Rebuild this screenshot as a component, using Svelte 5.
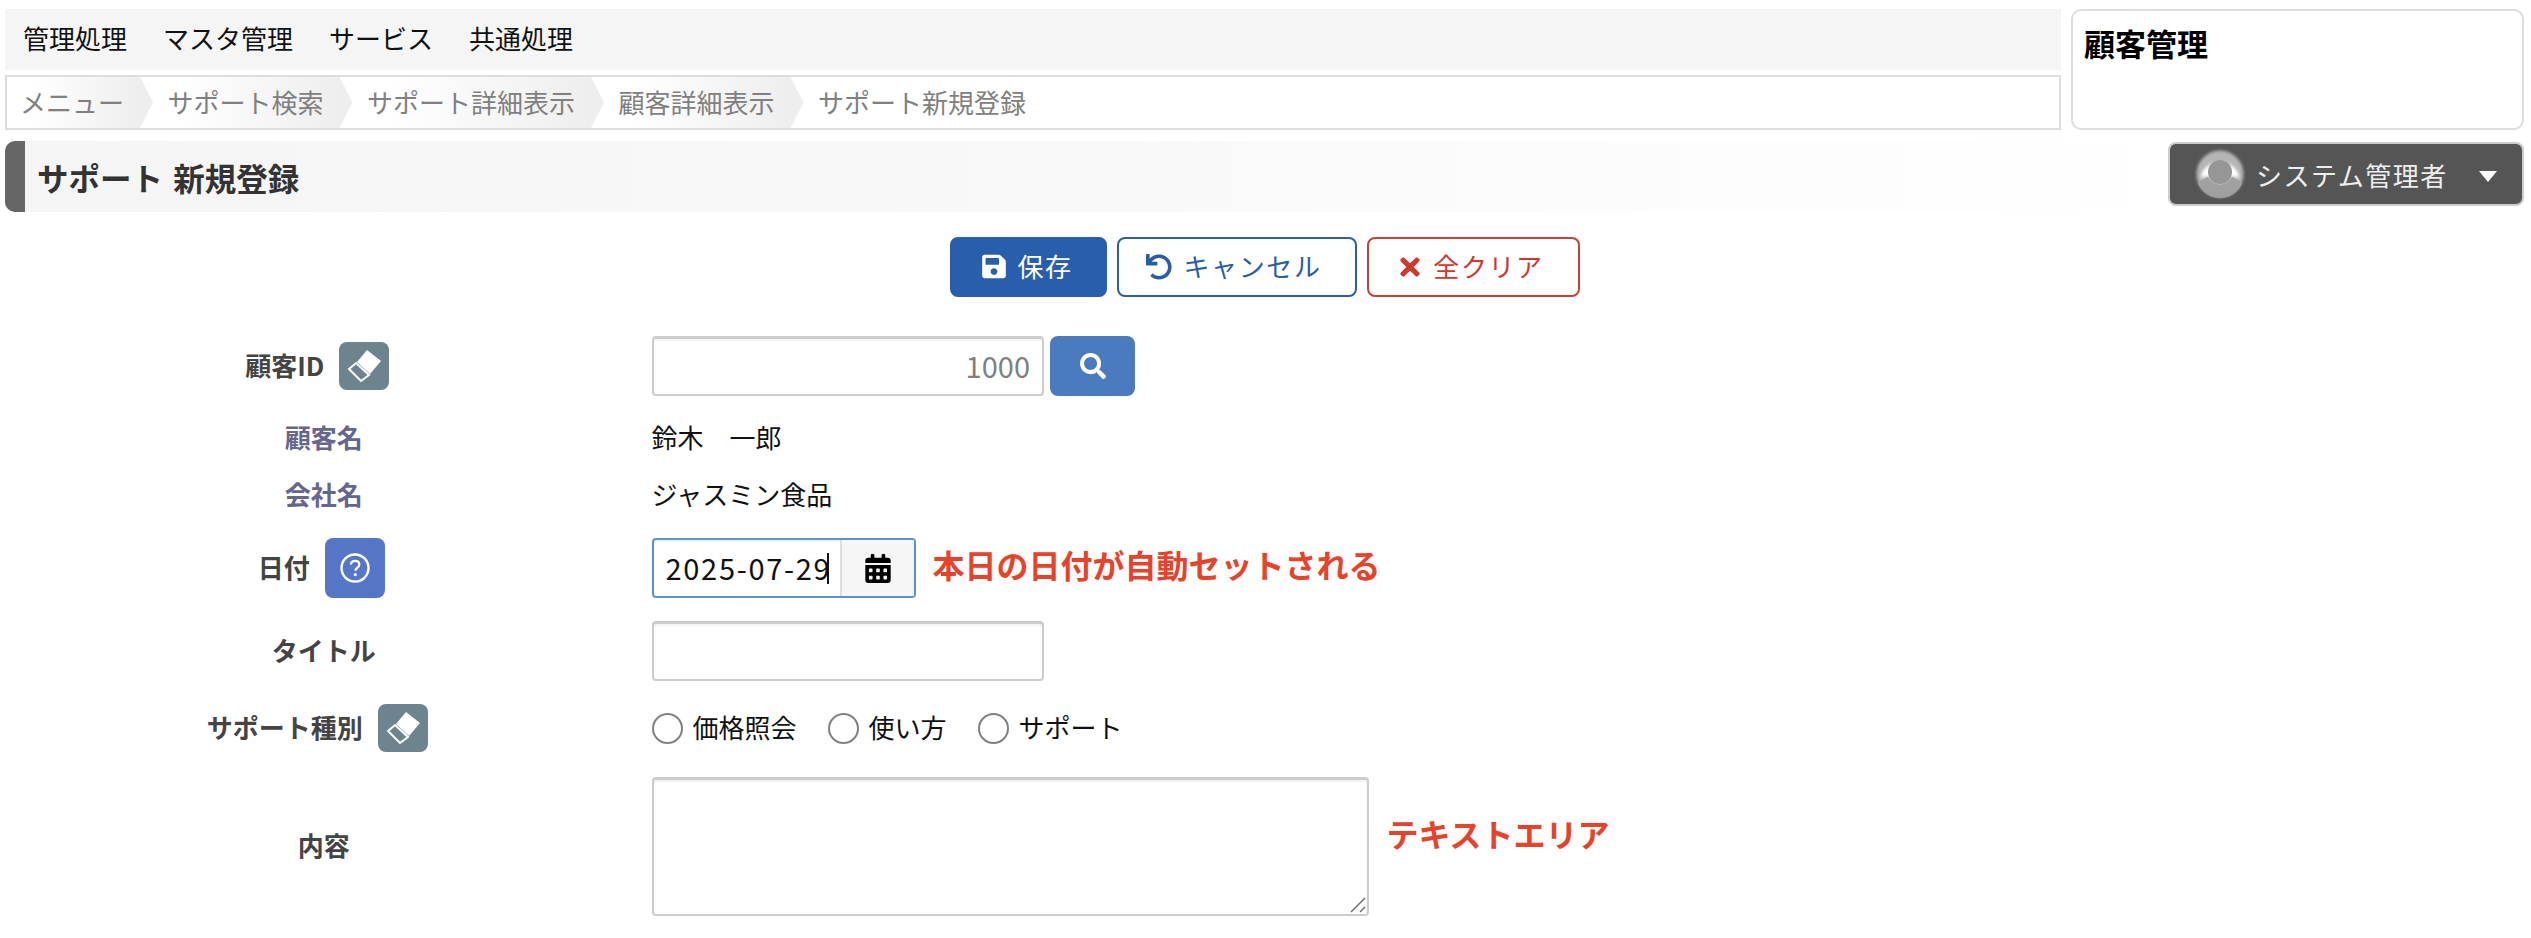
<script lang="ts">
	const menus = ['管理処理', 'マスタ管理', 'サービス', '共通処理'];
	const crumbs = ['メニュー', 'サポート検索', 'サポート詳細表示', '顧客詳細表示', 'サポート新規登録'];
	const kinds = ['価格照会', '使い方', 'サポート'];
</script>

{#snippet eraser()}
	<button class="tool eraser" type="button" aria-label="クリア">
		<svg viewBox="0 0 50 48" width="50" height="48">
			<path d="M28 8 42 19 31 32 18 20Z" fill="#fff" />
			<path d="M17 21 30 33 22 39 10 27Z" fill="none" stroke="#fff" stroke-width="2" />
		</svg>
	</button>
{/snippet}

<div class="page">
	<header class="top">
		<div class="top-left">
			<nav class="menu">
				{#each menus as item}
					<span>{item}</span>
				{/each}
			</nav>
			<ol class="crumbs">
				{#each crumbs as crumb, i}
					<li class:last={i === crumbs.length - 1}>{crumb}</li>
				{/each}
			</ol>
		</div>
		<aside class="screen-name">顧客管理</aside>
	</header>

	<div class="title-row">
		<h1>サポート 新規登録</h1>
		<button class="user" type="button">
			<svg class="avatar" viewBox="0 0 52 52" width="52" height="52">
				<defs>
					<filter id="soft"><feGaussianBlur stdDeviation="1.4" /></filter>
					<clipPath id="disc"><circle cx="26" cy="26" r="24" /></clipPath>
				</defs>
				<circle cx="26" cy="26" r="23.5" fill="#b5b5b5" filter="url(#soft)" />
				<g clip-path="url(#disc)">
					<path d="M7 30C8 9 44 9 45 30L38 28 26 36 14 28Z" fill="#fff" filter="url(#soft)" />
					<path d="M4 34 14 29C18 39 34 39 38 29L48 34V52H4Z" fill="#a0a0a0" />
				</g>
				<circle cx="26" cy="24" r="12" fill="#969696" />
			</svg>
			<span>システム管理者</span>
			<i class="caret"></i>
		</button>
	</div>

	<div class="actions">
		<button class="btn primary" type="button">
			<svg viewBox="0 0 448 512" width="24" height="27"><path d="M433.941 129.941l-83.882-83.882A48 48 0 0 0 316.118 32H48C21.49 32 0 53.49 0 80v352c0 26.51 21.49 48 48 48h352c26.51 0 48-21.49 48-48V163.882a48 48 0 0 0-14.059-33.941zM224 416c-35.346 0-64-28.654-64-64 0-35.346 28.654-64 64-64s64 28.654 64 64c0 35.346-28.654 64-64 64zm96-304.52V212c0 6.627-5.373 12-12 12H76c-6.627 0-12-5.373-12-12V108c0-6.627 5.373-12 12-12h228.52c3.183 0 6.235 1.264 8.485 3.515l3.48 3.48A11.996 11.996 0 0 1 320 111.48z" /></svg>
			保存
		</button>
		<button class="btn outline-blue" type="button">
			<svg viewBox="0 0 512 512" width="26" height="26"><path d="M212.333 224.333H12c-6.627 0-12-5.373-12-12V12C0 5.373 5.373 0 12 0h48c6.627 0 12 5.373 12 12v78.112C117.773 39.279 184.26 7.47 258.175 8.007c136.906.994 246.448 111.623 246.157 248.532C504.041 393.258 393.12 504 256.333 504c-64.089 0-122.496-24.313-166.51-64.215-5.099-4.622-5.334-12.554-.467-17.42l33.967-33.967c4.474-4.474 11.662-4.717 16.401-.525C170.76 415.336 211.58 432 256.333 432c97.268 0 176-78.716 176-176 0-97.267-78.716-176-176-176-58.496 0-110.28 28.476-142.274 72.333h98.274c6.627 0 12 5.373 12 12v48c0 6.627-5.373 12-12 12z" /></svg>
			キャンセル
		</button>
		<button class="btn outline-red" type="button">
			<svg viewBox="0 0 352 512" width="20" height="28"><path d="M242.72 256l100.07-100.07c12.28-12.28 12.28-32.19 0-44.48l-22.24-22.24c-12.28-12.28-32.19-12.28-44.48 0L176 189.28 75.93 89.21c-12.28-12.28-32.19-12.28-44.48 0L9.21 111.45c-12.28 12.28-12.28 32.19 0 44.48L109.28 256 9.21 356.07c-12.28 12.28-12.28 32.19 0 44.48l22.24 22.24c12.28 12.28 32.2 12.28 44.48 0L176 322.72l100.07 100.07c12.28 12.28 32.2 12.28 44.48 0l22.24-22.24c12.28-12.28 12.28-32.19 0-44.48L242.72 256z" /></svg>
			<span class="clear-text">全クリア</span>
		</button>
	</div>

	<form class="form">
		<div class="label"><span>顧客ID</span> {@render eraser()}</div>
		<div class="value">
			<input class="field id" type="text" value="1000" />
			<button class="tool search" type="button" aria-label="検索">
				<svg viewBox="0 0 512 512" width="26" height="26"><path d="M505 442.7L405.3 343c-4.5-4.5-10.6-7-17-7H372c27.6-35.3 44-79.7 44-128C416 93.1 322.9 0 208 0S0 93.1 0 208s93.1 208 208 208c48.3 0 92.7-16.4 128-44v16.3c0 6.4 2.5 12.5 7 17l99.7 99.7c9.4 9.4 24.6 9.4 33.9 0l28.3-28.3c9.4-9.4 9.4-24.6.1-34zM208 336c-70.7 0-128-57.2-128-128 0-70.7 57.2-128 128-128 70.7 0 128 57.2 128 128 0 70.7-57.2 128-128 128z" /></svg>
			</button>
		</div>

		<div class="label muted"><span>顧客名</span></div>
		<div class="value"><span>鈴木　一郎</span></div>

		<div class="label muted"><span>会社名</span></div>
		<div class="value"><span>ジャスミン食品</span></div>

		<div class="label">
			<span>日付</span>
			<button class="tool help" type="button" aria-label="ヘルプ">
				<svg viewBox="0 0 32 32" width="32" height="32">
					<circle cx="16" cy="16" r="13.5" fill="none" stroke="#fff" stroke-width="2.4" />
					<path d="M11.8 12.6c.3-2.4 2-3.7 4.3-3.7 2.5 0 4.2 1.5 4.2 3.6 0 1.7-.9 2.6-2.2 3.5-1.2.8-1.7 1.4-1.7 2.8" fill="none" stroke="#fff" stroke-width="2.2" />
					<circle cx="16.3" cy="22.6" r="1.6" fill="#fff" />
				</svg>
			</button>
		</div>
		<div class="value">
			<div class="date">
				<input type="text" value="2025-07-29" />
				<i class="text-cursor"></i>
				<span class="date-btn">
					<svg viewBox="0 0 448 512" width="26" height="29"><path d="M0 464c0 26.5 21.5 48 48 48h352c26.5 0 48-21.5 48-48V192H0v272zm320-196c0-6.6 5.4-12 12-12h40c6.6 0 12 5.4 12 12v40c0 6.6-5.4 12-12 12h-40c-6.6 0-12-5.4-12-12v-40zm0 128c0-6.6 5.4-12 12-12h40c6.6 0 12 5.4 12 12v40c0 6.6-5.4 12-12 12h-40c-6.6 0-12-5.4-12-12v-40zM192 268c0-6.6 5.4-12 12-12h40c6.6 0 12 5.4 12 12v40c0 6.6-5.4 12-12 12h-40c-6.6 0-12-5.4-12-12v-40zm0 128c0-6.6 5.4-12 12-12h40c6.6 0 12 5.4 12 12v40c0 6.6-5.4 12-12 12h-40c-6.6 0-12-5.4-12-12v-40zM64 268c0-6.6 5.4-12 12-12h40c6.6 0 12 5.4 12 12v40c0 6.6-5.4 12-12 12H76c-6.6 0-12-5.4-12-12v-40zm0 128c0-6.6 5.4-12 12-12h40c6.6 0 12 5.4 12 12v40c0 6.6-5.4 12-12 12H76c-6.6 0-12-5.4-12-12v-40zM400 64h-48V16c0-8.8-7.2-16-16-16h-32c-8.8 0-16 7.2-16 16v48H160V16c0-8.8-7.2-16-16-16h-32c-8.8 0-16 7.2-16 16v48H48C21.5 64 0 85.5 0 112v48h448v-48c0-26.5-21.5-48-48-48z" /></svg>
				</span>
			</div>
			<span class="note date-note">本日の日付が自動セットされる</span>
		</div>

		<div class="label"><span>タイトル</span></div>
		<div class="value"><input class="field" type="text" /></div>

		<div class="label"><span>サポート種別</span> {@render eraser()}</div>
		<div class="value radios">
			{#each kinds as kind}
				<label><input type="radio" name="kind" /><span>{kind}</span></label>
			{/each}
		</div>

		<div class="label"><span>内容</span></div>
		<div class="value">
			<div class="area">
				<textarea></textarea>
				<svg class="grip" viewBox="0 0 16 16" width="16" height="16">
					<path d="M1 15 15 1M10 15 15 10" stroke="#666" stroke-width="1.4" fill="none" />
				</svg>
			</div>
			<span class="note area-note">テキストエリア</span>
		</div>
	</form>
</div>

<style>
	:global(body) {
		margin: 0;
		background: #fff;
	}

	.page {
		font-family: 'Noto Sans CJK JP', 'Noto Sans', sans-serif;
		font-size: 26px;
		color: #111;
		height: 938px;
		overflow: hidden;
		box-sizing: border-box;
		padding: 9px 7px 0 5px;
	}

	.top {
		display: flex;
		gap: 10px;
	}

	.top-left {
		width: 2056px;
		display: flex;
		flex-direction: column;
		gap: 5px;
	}

	.menu {
		display: flex;
		align-items: center;
		gap: 36px;
		height: 61px;
		box-sizing: border-box;
		padding: 0 0 4px 18px;
		background: #f5f5f5;
	}

	.crumbs {
		display: flex;
		height: 55px;
		box-sizing: border-box;
		margin: 0;
		padding: 0;
		list-style: none;
		border: 2px solid #ddd;
		color: #808080;
		background: #fff;
	}

	.crumbs li {
		position: relative;
		display: flex;
		align-items: center;
		padding: 0 16px 3px 27.5px;
		background: linear-gradient(to right, #fff 20%, #eee);
	}

	.crumbs li:first-child {
		padding-left: 13px;
	}

	.crumbs li::after {
		content: '';
		position: absolute;
		z-index: 1;
		top: 0;
		bottom: 0;
		left: 100%;
		width: 13px;
		background: #eee;
		clip-path: polygon(0 0, 100% 50%, 0 100%);
	}

	.crumbs li.last {
		background: none;
	}

	.crumbs li.last::after {
		display: none;
	}

	.screen-name {
		flex: 1;
		box-sizing: border-box;
		height: 121px;
		padding: 10px 11px;
		border: 2px solid #ddd;
		border-radius: 10px;
		font-size: 31px;
		font-weight: 700;
		line-height: 44px;
		color: #000;
	}

	.title-row {
		display: flex;
		margin-top: 11px;
	}

	h1 {
		flex: 1;
		height: 71px;
		box-sizing: border-box;
		margin: 0;
		display: flex;
		align-items: center;
		padding-left: 12px;
		border-left: 20px solid #666;
		border-radius: 10px 0 0 10px;
		font-size: 31.5px;
		font-weight: 700;
		word-spacing: 3px;
		color: #333;
		background: linear-gradient(to right, #f5f5f5 0%, #f9f9f9 50%, #fff 100%);
	}

	.user {
		display: flex;
		align-items: center;
		box-sizing: border-box;
		width: 356px;
		height: 64px;
		margin-top: 1px;
		padding: 0 0 0 24px;
		border: 2px solid #ccc;
		border-radius: 8px;
		background: #555;
		color: #eee;
		font: inherit;
		font-size: 26px;
		letter-spacing: 1.5px;
	}

	.user span {
		margin-top: 1px;
	}

	.avatar {
		flex: none;
		margin-right: 10px;
	}

	.caret {
		margin: 4px 0 0 31px;
		border-top: 11px solid #fff;
		border-left: 9px solid transparent;
		border-right: 9px solid transparent;
	}

	.actions {
		display: flex;
		justify-content: center;
		gap: 10px;
		margin-top: 25px;
		padding-left: 1px;
	}

	.btn {
		display: flex;
		align-items: center;
		justify-content: center;
		gap: 11px;
		height: 60px;
		box-sizing: border-box;
		padding: 0 0 3px;
		border-radius: 8px;
		border: 2px solid;
		background: #fff;
		font: inherit;
		font-size: 26px;
		letter-spacing: 1.6px;
	}

	.btn svg {
		fill: currentColor;
		margin-top: 2px;
	}

	.clear-text {
		margin-left: 2px;
	}

	.primary {
		width: 157px;
		padding-right: 2px;
		background: #285eac;
		border-color: #285eac;
		color: #fff;
	}

	.outline-blue {
		width: 240px;
		padding-right: 6px;
		border-color: #2f5f9e;
		color: #2a5ca8;
	}

	.outline-red {
		width: 213px;
		padding-right: 3px;
		border-color: #c9403a;
		color: #d0372f;
	}

	.form {
		display: grid;
		grid-template-columns: 646.5px 1fr;
		grid-template-rows: 80px 64px 50px 96px 70px 84px 153px;
		margin-top: 29px;
		margin-left: -5px;
		padding-left: 5px;
	}

	.label {
		display: flex;
		align-items: center;
		justify-content: center;
		gap: 15px;
		font-weight: 700;
		color: #444;
		padding-right: 9px;
	}

	.label > span,
	.value > span,
	.radios span {
		margin-bottom: 4px;
	}

	.label.muted {
		color: #66668f;
	}

	.value {
		display: flex;
		align-items: center;
	}

	.tool {
		display: flex;
		align-items: center;
		justify-content: center;
		padding: 0;
		border: 0;
		border-radius: 8px;
	}

	.eraser {
		width: 50px;
		height: 48px;
		margin-right: 13px;
		background: #6d848e;
	}

	.help {
		width: 60px;
		height: 60px;
		margin-right: 5px;
		background: #5577c5;
	}

	.search {
		width: 85px;
		height: 60px;
		margin-left: 6px;
		background: #4a7bbf;
		fill: #fff;
	}

	.field,
	textarea {
		box-sizing: border-box;
		border: 2px solid #ccc;
		border-top-width: 3px;
		border-radius: 4px;
		outline: none;
		font: inherit;
		background: #fff;
		box-shadow: inset 0 2px 2px rgba(0, 0, 0, 0.05);
	}

	.field {
		width: 392.5px;
		height: 60px;
		padding: 0 12px 3px;
	}

	.field.id {
		font-size: 29px;
		text-align: right;
		color: #808080;
	}

	.date {
		display: flex;
		align-items: center;
		box-sizing: border-box;
		width: 264px;
		height: 60px;
		border: 2px solid #5f92c6;
		border-radius: 4px;
		box-shadow: inset 0 2px 2px rgba(0, 0, 0, 0.06);
	}

	.date input {
		width: 173px;
		height: 100%;
		box-sizing: border-box;
		padding: 0 0 3px 12px;
		border: 0;
		outline: none;
		background: none;
		font: inherit;
		font-size: 29px;
		letter-spacing: 1.7px;
		color: #111;
	}

	.text-cursor {
		width: 2px;
		height: 31px;
		background: #111;
	}

	.date-btn {
		display: flex;
		align-items: center;
		justify-content: center;
		flex: 1;
		align-self: stretch;
		margin-left: 11px;
		border-left: 2px solid #ddd;
		background: #f5f5f5;
	}

	.note {
		font-size: 32px;
		font-weight: 700;
		color: #e6432a;
	}

	.value > .date-note {
		margin: -9px 0 0 17px;
	}

	.area {
		position: relative;
		display: flex;
	}

	textarea {
		width: 717px;
		height: 139px;
		resize: none;
		padding: 6px 12px;
	}

	.grip {
		position: absolute;
		right: 3px;
		bottom: 3px;
	}

	.value > .area-note {
		margin: -28px 0 0 18px;
	}

	.radios {
		gap: 31px;
	}

	.radios label {
		display: flex;
		align-items: center;
		gap: 10px;
	}

	.radios input {
		appearance: none;
		flex: none;
		width: 31px;
		height: 31px;
		margin: 0;
		border: 2px solid #808080;
		border-radius: 50%;
		background: #fff;
	}
</style>
